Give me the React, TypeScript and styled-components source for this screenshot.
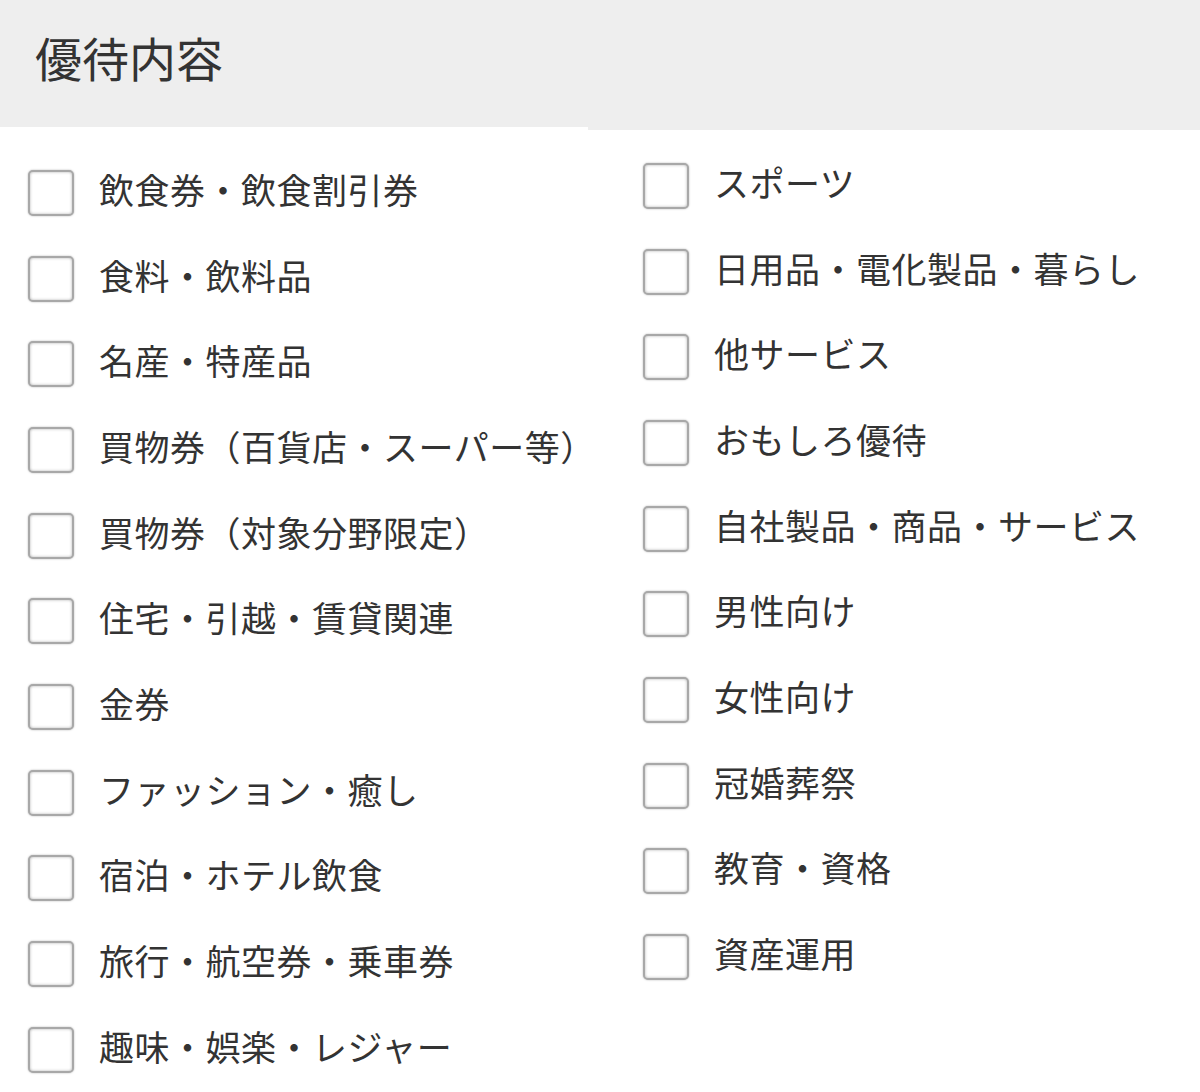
import React from 'react';
import styled, { createGlobalStyle } from 'styled-components';

const GlobalStyle = createGlobalStyle`
  html, body {
    margin: 0;
    padding: 0;
    background: #fff;
  }
  body {
    font-family: "Noto Sans CJK JP", "Noto Sans", sans-serif;
    color: #333;
  }
`

const Page = styled.div`
  width: 1200px;
  height: 1092px;
  overflow: hidden;
  background: #fff;
`

const Header = styled.div`
  height: 127px;
  background: #eeeeee;
  display: flex;
  align-items: center;
  padding-left: 35px;
  box-sizing: border-box;
`

const Title = styled.h2`
  margin: 0 0 14px;
  font-size: 47px;
  font-weight: 400;
  color: #333;
  line-height: 1;
`

const Columns = styled.div`
  display: grid;
  grid-template-columns: 588px 1fr;
`

const Column = styled.ul<{ $top: number; $left: number; $band: number }>`
  list-style: none;
  margin: 0;
  padding: ${(p) => p.$top}px 0 0 ${(p) => p.$left}px;
  border-top: ${(p) => p.$band}px solid #eeeeee;
`

const Row = styled.li`
  height: 85.7px;
  display: flex;
  align-items: center;
  gap: 25px;
`

const Box = styled.span`
  flex: none;
  width: 46px;
  height: 46px;
  box-sizing: border-box;
  border: 2px solid #a8a8a8;
  border-radius: 5px;
  background: #fff;
  box-shadow: inset 0 0 3px rgba(0, 0, 0, 0.3), 0 0 2px rgba(0, 0, 0, 0.3);
`

const Label = styled.span`
  font-size: 35px;
  letter-spacing: 0.5px;
  line-height: 1;
  padding-bottom: 9px;
  color: #333;
  white-space: nowrap;
`

const left = [
  '飲食券・飲食割引券',
  '食料・飲料品',
  '名産・特産品',
  '買物券（百貨店・スーパー等）',
  '買物券（対象分野限定）',
  '住宅・引越・賃貸関連',
  '金券',
  'ファッション・癒し',
  '宿泊・ホテル飲食',
  '旅行・航空券・乗車券',
  '趣味・娯楽・レジャー',
];

const right = [
  'スポーツ',
  '日用品・電化製品・暮らし',
  '他サービス',
  'おもしろ優待',
  '自社製品・商品・サービス',
  '男性向け',
  '女性向け',
  '冠婚葬祭',
  '教育・資格',
  '資産運用',
];

const Option = ({ label }: { label: string }) => (
  <Row>
    <Box />
    <Label>{label}</Label>
  </Row>
);

export default function App() {
  return (
    <Page>
      <GlobalStyle />
      <Header>
        <Title>優待内容</Title>
      </Header>
      <Columns>
        <Column $top={23} $left={28} $band={0}>
          {left.map((l) => <Option key={l} label={l} />)}
        </Column>
        <Column $top={13} $left={55} $band={3}>
          {right.map((l) => <Option key={l} label={l} />)}
        </Column>
      </Columns>
    </Page>
  );
}
